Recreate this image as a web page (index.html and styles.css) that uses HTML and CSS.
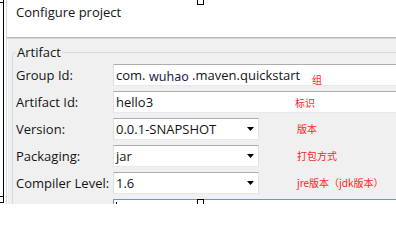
FILE: index.html
```html
<!DOCTYPE html>
<html>
<head>
<meta charset="utf-8">
<link rel="stylesheet" href="styles.css">
</head>
<body>
<div class="canvas">
  <div class="dialog">
    <div class="title">Configure project</div>
    <div class="rule"></div>
    <div class="body">
      <fieldset class="group">
        <legend>Artifact</legend>
        <div class="form">
          <label>Group Id:</label>
          <div class="field text">com. <span class="alt">wuhao</span> .maven.quickstart<span class="note note-group">组</span></div>
          <label>Artifact Id:</label>
          <div class="field text">hello3<span class="note note-artifact">标识</span></div>
          <label>Version:</label>
          <div class="ctl"><div class="field combo"><span>0.0.1-SNAPSHOT</span><svg class="caret" width="7" height="4" viewBox="0 0 7 4"><polygon points="0,0 7,0 3.5,4" fill="#000"/></svg></div><span class="note">版本</span></div>
          <label>Packaging:</label>
          <div class="ctl"><div class="field combo"><span>jar</span><svg class="caret" width="7" height="4" viewBox="0 0 7 4"><polygon points="0,0 7,0 3.5,4" fill="#000"/></svg></div><span class="note">打包方式</span></div>
          <label>Compiler Level:</label>
          <div class="ctl"><div class="field combo"><span>1.6</span><svg class="caret" width="7" height="4" viewBox="0 0 7 4"><polygon points="0,0 7,0 3.5,4" fill="#000"/></svg></div><span class="note">jre版本（jdk版本）</span></div>
          <label></label>
          <div class="field text focus"><span class="cursor"></span></div>
        </div>
      </fieldset>
    </div>
  </div>
  <span class="frame-line"></span>
  <span class="handle h-tl"></span>
  <span class="handle h-tm"></span>
  <span class="handle h-bl"></span>
  <span class="handle h-bm"></span>
</div>
</body>
</html>
```
FILE: styles.css
```css
* { box-sizing: border-box; }
html, body { margin: 0; padding: 0; }
body {
  width: 396px;
  height: 204px;
  overflow: hidden;
  background: #fff;
  font-family: "Open Sans", "Noto Sans", sans-serif;
  color: #141414;
}
.canvas {
  position: relative;
  width: 396px;
  height: 204px;
  overflow: hidden;
}
.dialog {
  margin-left: 6px;
  border-left: 1px solid #cddbe7;
  height: 204px;
  display: flex;
  flex-direction: column;
}
.title {
  height: 37px;
  flex: none;
  padding: 4px 0 0 9px;
  font-size: 13px;
  line-height: 17px;
  background: #fff;
}
.rule {
  height: 2px;
  flex: none;
  border-top: 1px solid #b8b8b8;
  border-bottom: 1px solid #d8d8d8;
}
.body {
  flex: 1;
  margin-left: 1px;
  background: #f0f0f0;
  padding-top: 6px;
}
.group {
  margin: 0 0 0 4px;
  width: 430px;
  padding: 5px 0 0 3px;
  border: 1px solid #d3dce3;
  border-radius: 3px;
  min-inline-size: auto;
}
.group legend {
  padding: 0 1px;
  font-size: 13px;
  line-height: 14px;
}
.form {
  display: grid;
  grid-template-columns: 97px 1fr;
  grid-auto-rows: 22px;
  row-gap: 5px;
}
.form label {
  font-size: 13px;
  line-height: 22px;
  white-space: nowrap;
}
.field {
  height: 22px;
  border: 1px solid;
  border-color: #abadb3 #e2e3ea #e3e9ef #dbdfe6;
  background: #fff;
  padding-left: 2px;
  font-size: 13px;
  line-height: 20px;
  white-space: nowrap;
}
.text {
  width: 300px;
  position: relative;
}
.alt {
  color: #1c1c4c;
  font-family: "Noto Sans", sans-serif;
  font-size: 12.5px;
  vertical-align: -1px;
}
.ctl {
  display: flex;
  align-items: center;
}
.combo {
  width: 146px;
  display: flex;
  align-items: center;
  justify-content: space-between;
  padding-right: 4px;
}
.caret { display: block; }
.note {
  color: #ff1e1e;
  font-family: "Noto Sans CJK SC", sans-serif;
  font-size: 10px;
  line-height: 12px;
  white-space: nowrap;
}
.combo + .note { margin-left: 38px; }
.text .note { position: absolute; }
.note-group { left: 198px; top: 9px; }
.note-artifact { left: 181px; top: 5px; }
.focus { border-color: #6a98c6; }
.cursor {
  display: inline-block;
  width: 1px;
  height: 12px;
  margin-top: 2px;
  background: #000;
  vertical-align: top;
}
.frame-line {
  position: absolute;
  left: 3px;
  top: 0;
  width: 1px;
  height: 197px;
  background: #000;
}
.handle {
  position: absolute;
  width: 7px;
  height: 7px;
  border: 1px solid #000;
  background: #fff;
}
.h-tl { left: -3px; top: -4px; }
.h-tm { left: 197px; top: -2px; }
.h-bl { left: -3px; top: 196px; }
.h-bm { left: 197px; top: 199px; }
```
